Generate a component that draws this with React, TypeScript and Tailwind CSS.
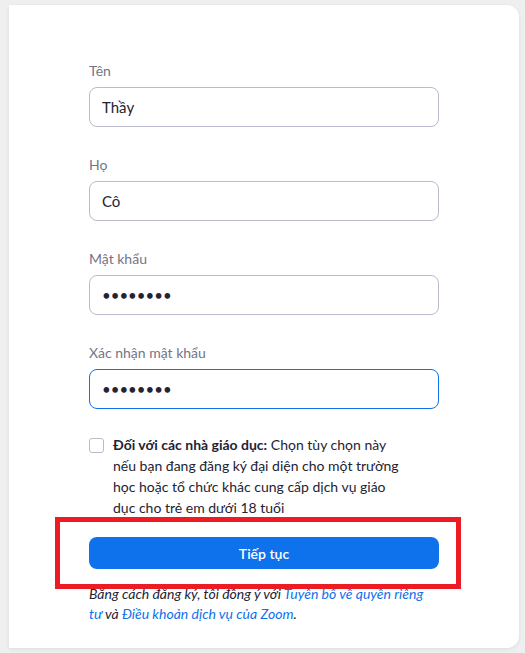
import React from 'react';

const FIELDS: { label: string; value: string; type: string; focused?: boolean }[] = [
  { label: 'Tên', value: 'Thầy', type: 'text' },
  { label: 'Họ', value: 'Cô', type: 'text' },
  { label: 'Mật khẩu', value: '12345678', type: 'password' },
  { label: 'Xác nhận mật khẩu', value: '12345678', type: 'password', focused: true },
];

export default function App() {
  return (
    <div className="min-h-[653px] w-[525px] bg-[#efefef] pt-[5px] pl-[9px] font-['Lato','Liberation_Sans',sans-serif]">
      <div className="w-[510px] h-[643px] bg-white rounded-r-[12px] shadow-[0_1px_4px_rgba(0,0,0,0.08)] px-[80px] pt-[56px]">
        <div className="flex flex-col gap-[28px]">
          {FIELDS.map(f => (
            <div key={f.label}>
              <label className="block text-[14px] leading-[20px] text-[#747487] mb-[6px]">{f.label}</label>
              <input
                type={f.type}
                value={f.value}
                readOnly
                className={
                  f.focused
                    ? 'w-full h-[40px] px-[12px] rounded-[8px] border border-[#0e71eb] text-[15px] text-[#232333] outline-none'
                    : 'w-full h-[40px] px-[12px] rounded-[8px] border border-[#babacc] text-[15px] text-[#232333] outline-none'
                }
              />
            </div>
          ))}
        </div>

        <div className="flex items-start gap-[9px] mt-[25px]">
          <span className="mt-[4px] w-[15px] h-[15px] shrink-0 rounded-[3px] border border-[#babacc] bg-white" />
          <p className="w-[295px] text-[14px] leading-[21px] text-[#232333]">
            <span className="font-bold">Đối với các nhà giáo dục:</span> Chọn tùy chọn này nếu bạn đang đăng ký đại diện
            cho một trường học hoặc tổ chức khác cung cấp dịch vụ giáo dục cho trẻ em dưới 18 tuổi
          </p>
        </div>

        <div className="relative mt-[19px]">
          <button className="w-full h-[32px] rounded-[8px] bg-[#0e72ed] text-white text-[14px] font-semibold">
            Tiếp tục
          </button>
          <div className="absolute -left-[34px] -right-[22px] -top-[20px] -bottom-[20px] border-[5px] border-[#ed1c24] z-10" />
        </div>

        <p className="mt-[15px] text-[14px] leading-[20px] italic text-[#232333]">
          Bằng cách đăng ký, tôi đồng ý với <span className="text-[#0e71eb]">Tuyên bố về quyền riêng tư</span> và{' '}
          <span className="text-[#0e71eb]">Điều khoản dịch vụ của Zoom</span>.
        </p>
      </div>
    </div>
  );
}
